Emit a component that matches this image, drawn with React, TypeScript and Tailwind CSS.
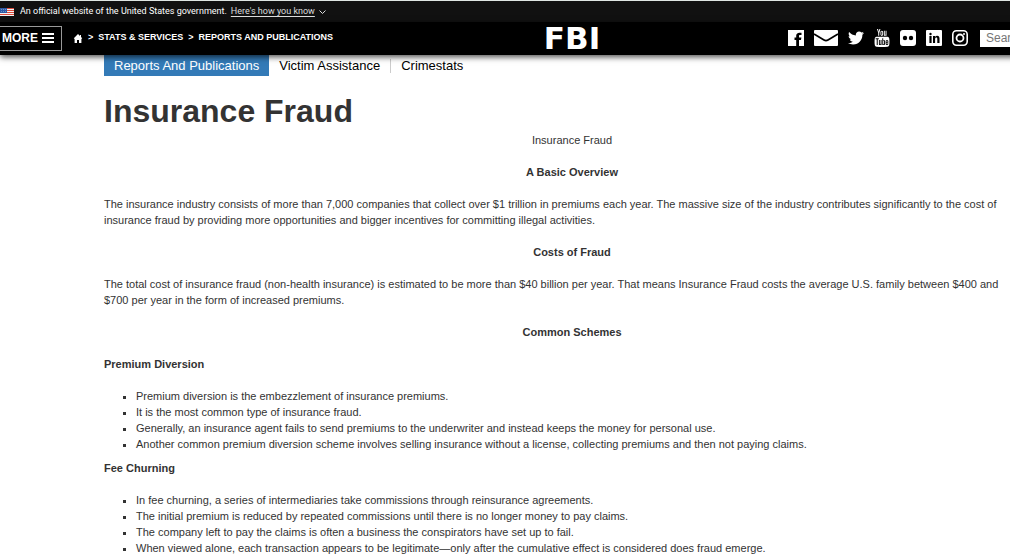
import type { ReactNode } from "react";
import { FaTwitter } from "react-icons/fa";
import { TfiYoutube } from "react-icons/tfi";

function Flag() {
  return (
    <svg viewBox="0 0 14 8" className="h-2 w-3.5" aria-hidden="true">
      <rect width="14" height="8" fill="#f4f4f4" />
      <path d="M0 .5h14M0 2.5h14M0 4.5h14M0 6.5h14" stroke="#dd4a3a" strokeWidth="1" />
      <rect width="7" height="5" fill="#2d5aa5" />
      <path d="M1 1.5h5M1 3.5h5" stroke="#8fa8d4" strokeWidth=".7" strokeDasharray="1 1" />
    </svg>
  );
}

function HomeIcon() {
  return (
    <svg viewBox="0 0 10 9" className="h-[9px] w-2.5" fill="currentColor" aria-hidden="true">
      <path d="M5 0 0.8 4.2 1.6 5V9H4V6H6V9H8.4V5L9.2 4.2 8 3V1H7V2Z" />
    </svg>
  );
}

function FacebookIcon() {
  return (
    <svg viewBox="0 0 16 16" className="size-4" aria-hidden="true">
      <path fill="#fff" fillRule="evenodd" d="M0 0H16V16H11V10H13L13.4 7.5H11V6.1C11 5.3 11.3 5 12.1 5H13.5V2.7H11.4C9.3 2.7 8.2 4 8.2 5.8V7.5H6.5V10H8.2V16H0Z" />
    </svg>
  );
}

function MailIcon() {
  return (
    <svg viewBox="0 0 24 16" className="h-4 w-6" aria-hidden="true">
      <rect width="24" height="16" rx="1" fill="#fff" />
      <path d="M0 4 10 10.1Q12 11.3 14 10.1L24 4" fill="none" stroke="#000" strokeWidth="1.7" />
    </svg>
  );
}

function FlickrIcon() {
  return (
    <svg viewBox="0 0 16 16" className="size-4" aria-hidden="true">
      <rect width="16" height="16" rx="3" fill="#fff" />
      <circle cx="5" cy="8" r="2.2" />
      <circle cx="11" cy="8" r="2.2" />
    </svg>
  );
}

function LinkedInIcon() {
  return (
    <svg viewBox="0 0 16 16" className="size-4" aria-hidden="true">
      <rect width="16" height="16" rx="1" fill="#fff" />
      <circle cx="4.5" cy="4" r="1.2" />
      <path d="M3.4 6h2.2v7H3.4zM7 6h2.1v1C9.6 6.2 10.3 5.8 11.2 5.8 12.8 5.8 13.5 6.9 13.5 8.6V13h-2.2V9c0-.9-.3-1.4-1-1.4-.8 0-1.2.6-1.2 1.5V13H7z" />
    </svg>
  );
}

function InstagramIcon() {
  return (
    <svg viewBox="0 0 16 16" className="size-4" fill="none" stroke="#fff" aria-hidden="true">
      <rect x=".8" y=".8" width="14.4" height="14.4" rx="3.6" strokeWidth="1.6" />
      <circle cx="8" cy="8" r="3.5" strokeWidth="1.8" />
      <circle cx="12" cy="4" r="1" fill="#fff" stroke="none" />
    </svg>
  );
}

const social: { name: string; icon: ReactNode }[] = [
  { name: "Facebook", icon: <FacebookIcon /> },
  { name: "Email", icon: <MailIcon /> },
  { name: "Twitter", icon: <FaTwitter className="size-4" /> },
  { name: "YouTube", icon: <TfiYoutube className="h-[18px] w-4" viewBox="1 0 15 17" /> },
  { name: "Flickr", icon: <FlickrIcon /> },
  { name: "LinkedIn", icon: <LinkedInIcon /> },
  { name: "Instagram", icon: <InstagramIcon /> },
];

const schemes = [
  {
    title: "Premium Diversion",
    points: [
      "Premium diversion is the embezzlement of insurance premiums.",
      "It is the most common type of insurance fraud.",
      "Generally, an insurance agent fails to send premiums to the underwriter and instead keeps the money for personal use.",
      "Another common premium diversion scheme involves selling insurance without a license, collecting premiums and then not paying claims.",
    ],
  },
  {
    title: "Fee Churning",
    points: [
      "In fee churning, a series of intermediaries take commissions through reinsurance agreements.",
      "The initial premium is reduced by repeated commissions until there is no longer money to pay claims.",
      "The company left to pay the claims is often a business the conspirators have set up to fail.",
      "When viewed alone, each transaction appears to be legitimate—only after the cumulative effect is considered does fraud emerge.",
    ],
  },
];

export default function App() {
  return (
    <div className="h-screen overflow-hidden bg-white font-['Liberation_Sans',Arial,sans-serif] text-[#333]">
      <div className="min-w-[1144px]">
        <section className="flex h-[22px] items-center border-t border-[#dfe6e3] bg-[#111] text-[9px] text-white">
          <Flag />
          <span className="ml-1.5 font-['Roboto',sans-serif]">An official website of the United States government.</span>
          <button className="ml-1 flex items-center gap-1 font-['Roboto',sans-serif] text-[#ddd]">
            <span className="underline underline-offset-2">Here's how you know</span>
            <svg viewBox="0 0 7 4" className="h-1 w-[7px]" fill="none" stroke="currentColor" aria-hidden="true">
              <path d="M.5.5 3.5 3.5 6.5.5" />
            </svg>
          </button>
        </section>

        <header className="relative grid h-[33px] grid-cols-[1fr_auto_1fr] items-center bg-black pb-px text-white shadow-[0_2px_6px_rgba(0,0,0,0.7)]">
          <div className="flex items-center">
            <button className="flex h-[25px] w-[62px] items-center gap-1 border border-l-0 border-[#999] pl-0.5 text-[12px] font-bold">
              MORE
              <svg viewBox="0 0 12 10" className="h-2.5 w-3" stroke="currentColor" strokeWidth="2" aria-hidden="true">
                <path d="M0 1h12M0 5h12M0 9h12" />
              </svg>
            </button>
            <nav aria-label="Breadcrumb" className="ml-[11px] flex items-center gap-[5px] text-[9px] font-bold">
              <a href="#home" aria-label="Home"><HomeIcon /></a>
              <span>&gt;</span>
              <a href="#services">STATS &amp; SERVICES</a>
              <span>&gt;</span>
              <a href="#reports">REPORTS AND PUBLICATIONS</a>
            </nav>
          </div>
          <a href="#home" className="font-['DejaVu_Sans',Verdana,sans-serif] text-[31px] leading-8 font-bold">FBI</a>
          <div className="flex items-center justify-end gap-2.5">
            {social.map((s) => (
              <a key={s.name} href={"#" + s.name.toLowerCase()} aria-label={s.name}>{s.icon}</a>
            ))}
            <input aria-label="Search" placeholder="Search FBI" className="ml-0.5 h-[17px] w-[164px] bg-white pl-1.5 text-[12px] text-black outline-none placeholder:text-[#777]" />
          </div>
        </header>

        <div className="mx-[104px]">
          <nav aria-label="Sections" className="flex h-[21px] items-center text-[13px] text-black">
            <a href="#publications" className="flex h-full items-center bg-[#337ab7] px-2.5 text-white">Reports And Publications</a>
            <a href="#victims" className="px-2.5">Victim Assistance</a>
            <a href="#crimestats" className="border-l border-[#ccc] px-2.5 leading-[14px]">Crimestats</a>
          </nav>

          <main className="pt-4 text-[11px] leading-4">
            <h1 className="mb-0.5 text-[32px] leading-[38px] font-bold">Insurance Fraud</h1>
            <p className="mb-4 text-center">Insurance Fraud</p>
            <h2 className="mb-4 text-center font-bold">A Basic Overview</h2>
            <p className="mb-4">
              The insurance industry consists of more than 7,000 companies that collect over $1 trillion in premiums each year. The massive size of the industry contributes significantly to the cost of
              <br />
              insurance fraud by providing more opportunities and bigger incentives for committing illegal activities.
            </p>
            <h2 className="mb-4 text-center font-bold">Costs of Fraud</h2>
            <p className="mb-4">
              The total cost of insurance fraud (non-health insurance) is estimated to be more than $40 billion per year. That means Insurance Fraud costs the average U.S. family between $400 and
              <br />
              $700 per year in the form of increased premiums.
            </p>
            <h2 className="mb-4 text-center font-bold">Common Schemes</h2>
            {schemes.map((s) => (
              <section key={s.title} className="mb-2">
                <h3 className="mb-4 font-bold">{s.title}</h3>
                <ul className="list-[square] pl-8">
                  {s.points.map((p) => <li key={p}>{p}</li>)}
                </ul>
              </section>
            ))}
          </main>
        </div>
      </div>
    </div>
  );
}
